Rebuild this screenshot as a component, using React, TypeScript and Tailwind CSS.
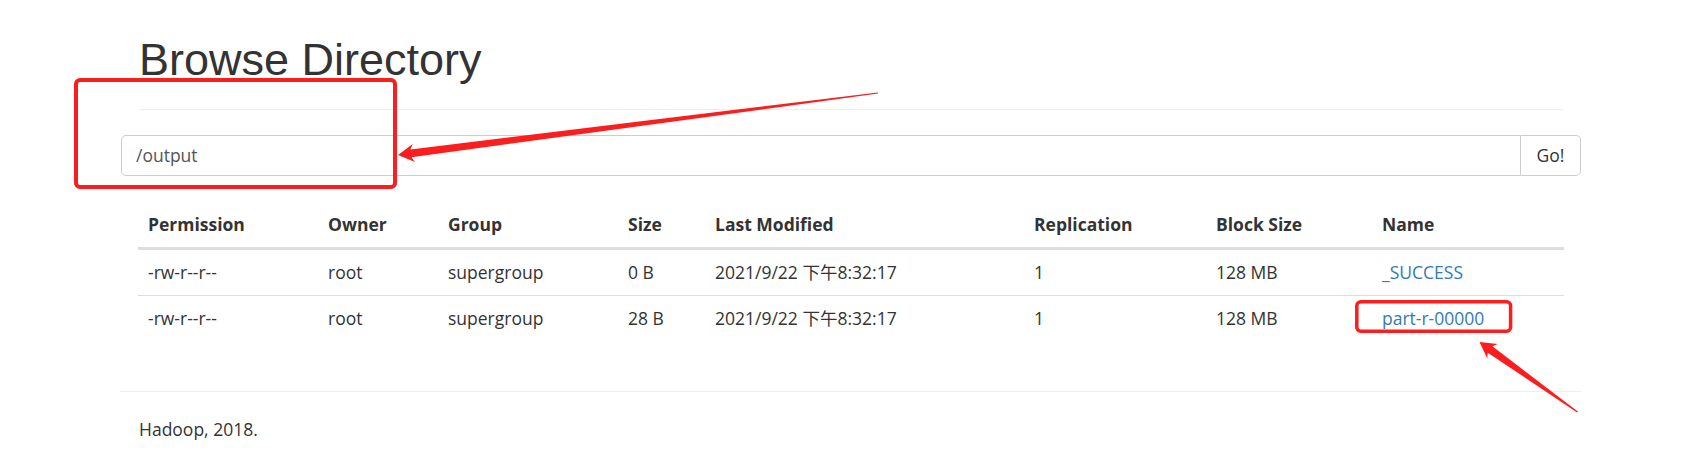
export default function App() {
  const rows = [
    ["-rw-r--r--", "root", "supergroup", "0 B", "2021/9/22 下午8:32:17", "1", "128 MB", "_SUCCESS"],
    ["-rw-r--r--", "root", "supergroup", "28 B", "2021/9/22 下午8:32:17", "1", "128 MB", "part-r-00000"],
  ];
  const heads = ["Permission", "Owner", "Group", "Size", "Last Modified", "Replication", "Block Size", "Name"];
  return (
    <div className="relative w-[1687px] h-[454px] overflow-hidden bg-white text-[#333] font-['Open_Sans','Noto_Sans_CJK_SC',sans-serif] text-[17.5px] leading-[25px]">
      <div className="ml-[139px] w-[1424px] pt-[35px] pb-[12px] border-b border-[#eee]">
        <h1 className="m-0 mb-[12.5px] text-[45px] leading-[49.5px] font-normal text-[#333] font-['Liberation_Sans',Arial,sans-serif]">
          Browse Directory
        </h1>
      </div>

      <div className="ml-[121px] w-[1460px] mt-[25px] h-[41px] flex">
        <div className="flex-1 h-full border border-[#ccc] rounded-l-[5px] flex items-center px-[14px] text-[#555]">
          /output
        </div>
        <div className="w-[60px] h-full border border-l-0 border-[#ccc] rounded-r-[5px] flex items-center justify-center text-[#333]">
          Go!
        </div>
      </div>

      <table className="ml-[138px] mt-[26px] w-[1426px] table-fixed border-collapse">
        <colgroup>
          <col className="w-[180px]" />
          <col className="w-[120px]" />
          <col className="w-[180px]" />
          <col className="w-[87px]" />
          <col className="w-[319px]" />
          <col className="w-[182px]" />
          <col className="w-[166px]" />
          <col className="w-[192px]" />
        </colgroup>
        <thead>
          <tr>
            {heads.map((h) => (
              <th key={h} className="p-[10px] text-left font-bold border-b-[3px] border-[#ddd] whitespace-nowrap">
                {h}
              </th>
            ))}
          </tr>
        </thead>
        <tbody>
          {rows.map((r, i) => (
            <tr key={i}>
              {r.map((c, j) => (
                <td key={j} className="p-[10px] border-t border-[#ddd] whitespace-nowrap">
                  {j === 7 ? <span className="text-[#337ab7]">{c}</span> : c}
                </td>
              ))}
            </tr>
          ))}
        </tbody>
      </table>

      <div className="ml-[120px] w-[1461px] mt-[50px] border-t border-[#eee]" />
      <div className="ml-[139px] mt-[25px]">Hadoop, 2018.</div>

      <svg className="absolute left-0 top-0 pointer-events-none" width="1687" height="454" viewBox="0 0 1687 454">
        <rect x="76" y="80" width="319" height="107" rx="4" fill="none" stroke="#fa1e1e" strokeWidth="4" />
        <rect x="1356.8" y="301.8" width="153.8" height="29.5" rx="4" fill="none" stroke="#fa1e1e" strokeWidth="3.5" />
        <polygon
          fill="#fa1e1e"
          points="398,155 415,161.9 411.4,157.3 878.1,93.6 877.9,92.4 410.4,149.4 412.7,144"
        />
        <polygon
          fill="#fa1e1e"
          points="1479.5,342 1497.75,343.98 1492.4,346.3 1577.85,411.51 1577.15,412.49 1487.76,352.81 1487.29,358.62"
        />
      </svg>
    </div>
  );
}
